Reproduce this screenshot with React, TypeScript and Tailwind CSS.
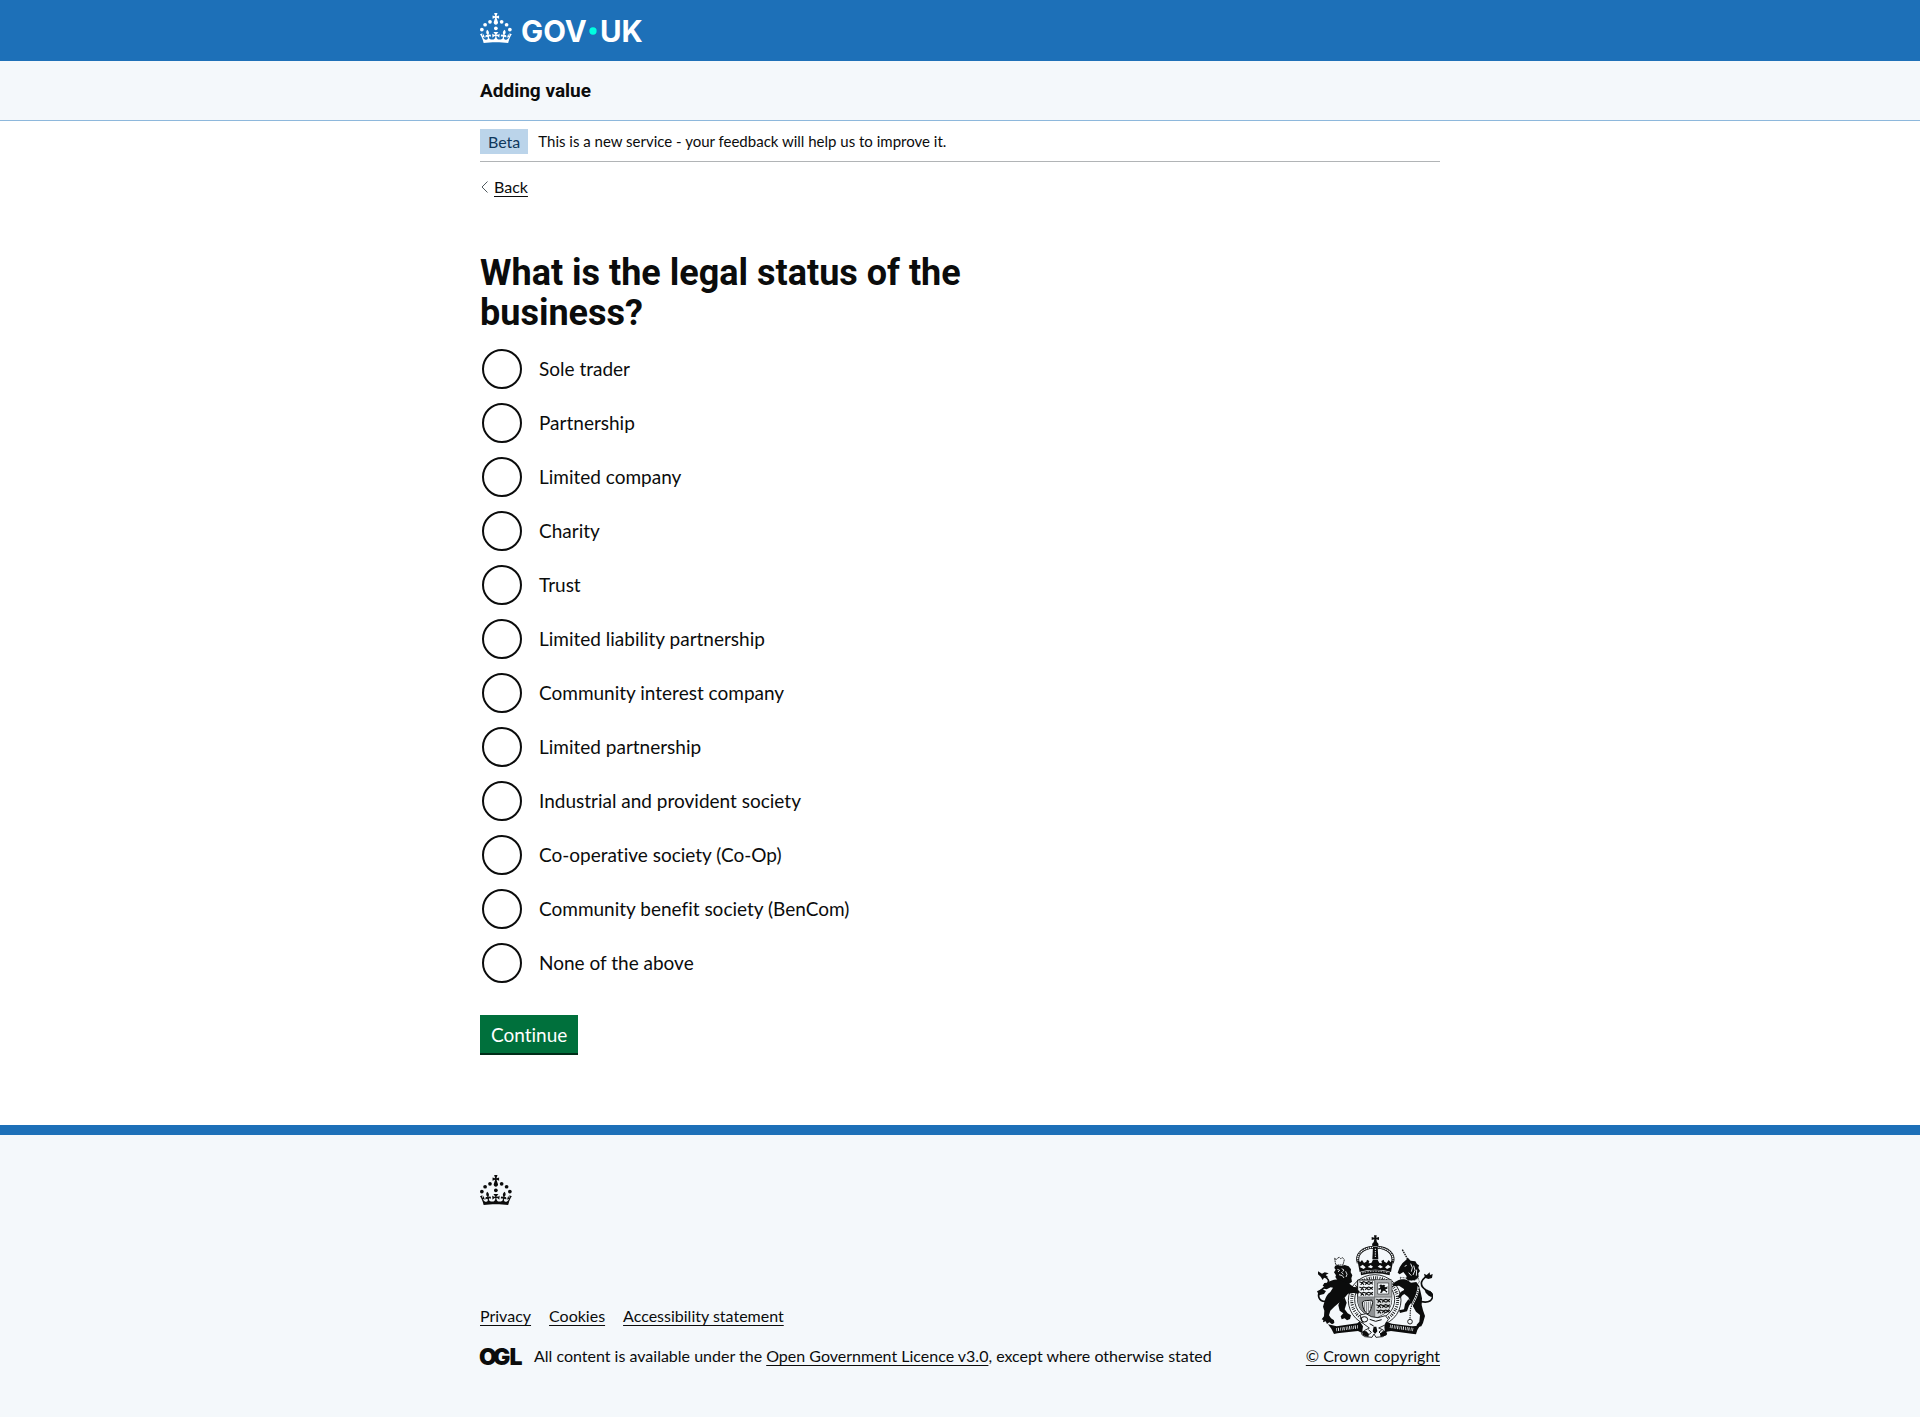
const options = [
  'Sole trader',
  'Partnership',
  'Limited company',
  'Charity',
  'Trust',
  'Limited liability partnership',
  'Community interest company',
  'Limited partnership',
  'Industrial and provident society',
  'Co-operative society (Co-Op)',
  'Community benefit society (BenCom)',
  'None of the above',
];

const linkClass = 'underline decoration-1 underline-offset-3 hover:decoration-[3px]';

function CrownShape() {
  return (
    <g>
      <circle cx="20" cy="17.6" r="3.7" />
      <circle cx="10.2" cy="23.5" r="3.7" />
      <circle cx="3.7" cy="33.2" r="3.7" />
      <circle cx="31.7" cy="30.6" r="3.7" />
      <circle cx="43.3" cy="17.6" r="3.7" />
      <circle cx="53.2" cy="23.5" r="3.7" />
      <circle cx="59.7" cy="33.2" r="3.7" />
      <path d="M33.1,9.8c.2-.1.3-.3.5-.5l4.6,2.4v-6.8l-4.6,1.5c-.1-.2-.3-.3-.5-.5l1.9-5.9h-6.7l1.9,5.9c-.2.1-.3.3-.5.5l-4.6-1.5v6.8l4.6-2.4c.1.2.3.3.5.5l-2.6,8c-.9,2.8,1.2,5.7,4.1,5.7h0c3,0,5.1-2.9,4.1-5.7l-2.6-8ZM37,37.9s-3.4,3.8-4.1,6.1c2.2,0,4.2-.5,6.4-2.8l-.7,8.5c-2-2.8-4.4-4.1-5.7-3.8.1,3.1.5,6.7,5.8,7.2,3.7.3,6.7-1.5,7-3.8.4-2.6-2-4.3-3.7-1.6-1.4-4.5,2.4-6.1,4.9-3.2-1.9-4.5-1.8-7.7,2.4-10.9,3,4,2.6,7.3-1.2,11.1,2.4-1.3,6.2,0,4,4.6-1.2-2.8-3.7-2.2-4.2.2-.3,1.7.7,3.7,3,4.2,1.9.3,4.7-.9,7-5.9-1.3,0-2.4.7-3.9,1.7l2.4-8c.6,2.3,1.4,3.7,2.2,4.5.6-1.6.5-2.8,0-5.3l5,1.8c-2.6,3.6-5.2,8.7-7.3,17.5-7.4-1.1-15.7-1.7-24.5-1.7h0c-8.8,0-17.1.6-24.5,1.7-2.1-8.9-4.7-13.9-7.3-17.5l5-1.8c-.5,2.5-.6,3.7,0,5.3.8-.8,1.6-2.3,2.2-4.5l2.4,8c-1.5-1-2.6-1.7-3.9-1.7,2.3,5,5.2,6.2,7,5.9,2.3-.4,3.3-2.4,3-4.2-.5-2.4-3-3.1-4.2-.2-2.2-4.6,1.6-6,4-4.6-3.7-3.7-4.2-7.1-1.2-11.1,4.2,3.2,4.3,6.4,2.4,10.9,2.5-2.8,6.3-1.3,4.9,3.2-1.8-2.7-4.1-1-3.7,1.6.3,2.3,3.3,4.1,7,3.8,5.4-.5,5.7-4.2,5.8-7.2-1.3-.2-3.7,1-5.7,3.8l-.7-8.5c2.2,2.3,4.2,2.7,6.4,2.8-.7-2.3-4.1-6.1-4.1-6.1h10.6,0Z" />
    </g>
  );
}

function GovLogo() {
  return (
    <svg
      viewBox="0 0 324 60"
      width="162"
      height="30"
      fill="currentColor"
      className="overflow-visible"
      role="img"
      aria-label="GOV.UK"
    >
      <CrownShape />
      <g fontFamily="Inter, sans-serif" fontWeight="700" fontSize="59">
        <text x="82" y="57">GOV</text>
        <text x="240" y="57">UK</text>
      </g>
      <circle cx="226" cy="36" r="7.3" fill="#00ffe0" />
    </svg>
  );
}

function OglLogo() {
  return (
    <svg
      viewBox="0 0 41 17"
      width="41"
      height="17"
      fill="currentColor"
      className="shrink-0 overflow-visible"
      aria-hidden="true"
    >
      <g fontFamily="Inter, sans-serif" fontWeight="900" fontSize="23">
        <text x="-1" y="16.8">O</text>
        <text x="13" y="16.8">G</text>
        <text x="29.5" y="16.8">L</text>
      </g>
    </svg>
  );
}

/* Three walking lions stacked, used in two quarters of the shield. */
function Lions({ x, y }: { x: number; y: number }) {
  return (
    <g transform={`translate(${x} ${y})`}>
      {[0, 16, 32].map((dy) => (
        <path
          key={dy}
          transform={`translate(0 ${dy})`}
          fill="none"
          stroke="#0b0c0c"
          strokeWidth="3.4"
          d="M1 2l7 3 6-3 8 3 7-3 8 3 5-3M5 12l5-6 5 6M19 11l4-6 6 6M31 11l5-6 5 5"
        />
      ))}
    </g>
  );
}

function RoyalArms() {
  return (
    <svg
      viewBox="82 43 348 309"
      width="116"
      height="103"
      fill="#0b0c0c"
      className="mr-[7px]"
      aria-hidden="true"
    >
      {/* crown */}
      <path d="M253 44h8l-1 7 8-2v9l-8-2 2 9c5 3 6 8 3 12h-16c-3-4-2-9 3-12l2-9-8 2v-9l8 2z" />
      <path
        d="M206 127c-9-26 14-46 45-47M308 127c9-26-14-46-45-47"
        fill="none"
        stroke="#0b0c0c"
        strokeWidth="9"
      />
      <path
        d="M206 127c-9-26 14-46 45-47M308 127c9-26-14-46-45-47"
        fill="none"
        stroke="#f4f8fb"
        strokeWidth="4"
        strokeDasharray="4 2"
      />
      <path d="M250 78h14l2 38h-18z" />
      <path d="M257 84v28" stroke="#f4f8fb" strokeWidth="3" strokeDasharray="4 3" />
      <path d="M203 117l8 8 6-7 6 9 7-4 2-6 7 4-2 7 8-1 5-10h14l5 10 8 1-2-7 7-4 2 6 7 4 6-9 6 7 8-8-7 37c-28-9-66-9-94 0z" />
      <path d="M210 139l9-7 9 8-6 5M234 139l9-6 7 5-5 5M264 138l7-5 9 6-7 4M286 140l9-8 9 7-12 6" fill="#f4f8fb" />
      <path d="M213 155c28-8 60-8 88 0l-1 9c-28-8-58-8-86 0z" />
      <path d="M217 157c27-7 53-7 80 0" fill="none" stroke="#f4f8fb" strokeWidth="2" strokeDasharray="5 3" />

      {/* garter */}
      <ellipse cx="255" cy="239" rx="79" ry="77" fill="#f4f8fb" stroke="#0b0c0c" strokeWidth="2.6" />
      <ellipse cx="255" cy="238" rx="69" ry="67" fill="none" stroke="#0b0c0c" strokeWidth="9" strokeDasharray="2.6 4 3 3 2 5" />
      <ellipse cx="255" cy="237" rx="60" ry="59" fill="#f4f8fb" stroke="#0b0c0c" strokeWidth="2.6" />

      {/* shield */}
      <path d="M204 178h102v58c0 28-18 46-51 56-33-10-51-28-51-56z" fill="#f4f8fb" stroke="#0b0c0c" strokeWidth="3" />
      <path d="M255 178h51v51h-51z" fill="#a9acae" />
      <path d="M264 187h33v33h-33z" fill="#f4f8fb" stroke="#0b0c0c" strokeWidth="1.6" />
      <path d="M274 191l3 3 6-2 4 3-3 4 6 1 3-4v8l-6 2 2 4 4 1-2 5-5-5-6-1-3 6-6 1 3-6 0-5-7 2-1-5 5-1 1-4-4-2z" />
      <path d="M255 229v63c33-10 51-28 51-56v-7z" fill="#d5d8da" />
      <path d="M204 229h51v62c-33-9-51-27-51-55z" fill="#8f9294" />
      <path d="M218 244c8-7 18-3 28-6l3 8c-4 16-7 26-14 34-10-5-17-18-17-36z" fill="#f4f8fb" stroke="#0b0c0c" strokeWidth="3" />
      <path d="M224 244v26M230 243v32M236 243v31M242 242v20" stroke="#0b0c0c" strokeWidth="1.6" />
      <Lions x={208} y={181} />
      <Lions x={259} y={234} />
      <path d="M255 178v114M204 229h102" stroke="#77797b" strokeWidth="3" />

      {/* lion supporter */}
      <path d="M135 113l5 4 4-5 5-2 4 4 6-3 5 6-4 16h-22z" fill="#f4f8fb" stroke="#0b0c0c" strokeWidth="2.6" strokeDasharray="5 1.6" />
      <path d="M136 136l8-3 10 3 11-3 12 4 7 9-1 9 5 9-3 9 2 10-10 8-16-2-10-8-8-3-6-9 2-5-6-9 5-8-4-5z" />
      <path d="M143 146l7 3-5 5M156 144l7 4-4 5M148 162l10 3 5 7M168 152l4 9-3 8M155 154l6 7" fill="none" stroke="#f4f8fb" strokeWidth="2.6" />
      <path d="M150 178c-14-4-26 2-38 8l-8 1-5 8 6 4-2 5 8 2 12-6 7 1-8 13c-10 7-14 16-17 27l-5 17 4 12-1 17-7 9 5 2-1 7 8-3 4 8 7-5 8 6 7-4-1-8-9-6-6-9 4-14 12-12 16-13 14-13 11-13 17-2 14 2 4-8-8-4 3-7-13-1-13-10-16-6z" />
      <path d="M151 239l-5 15 4 16 11 8-8 9 3 9 9-3 7 6 9-4 3-11-10-6-9-12 6-20-6-15z" />
      <path d="M121 240c-16 4-29 2-33-9-5-13 4-21 14-29 10-9 17-15 14-24-4-10-13-9-18-14" fill="none" stroke="#0b0c0c" strokeWidth="5" />
      <path d="M85 152l12 7 8-4 12 3-9 5 8 7-13 1-4 7-6-10-8-7zM82 212l14-7 13 6-6 9-15 4z" />

      {/* unicorn supporter */}
      <path d="M338 87l19 34" stroke="#0b0c0c" strokeWidth="4" strokeDasharray="5 2" />
      <path d="M355 112l8 8 14 2 5 8 6 4-2 8 5 9-5 7 1 11-9 8-17 4-13-4 3-10-10-13-11 7-6-5 6-16 8-12 10-9z" />
      <path d="M345 137l6-3M363 129l5 12-3 12M372 135l4 14-6 14M357 156l8 9M381 147l-1 18" fill="none" stroke="#f4f8fb" strokeWidth="2.8" />
      <path d="M331 170l17 2 7 7 19 0 12-6 3 10-6 9-12 5-15-1-13 3z" fill="#f4f8fb" stroke="#0b0c0c" strokeWidth="2" strokeDasharray="3 1.5" />
      <path d="M356 180c-17-8-29-3-40 4l-8 7 4 6 16-2 15 10 1 15 12 10 7 16 8 13 8 14 12 10-2 20-9 11 5 5 10-2 5-10 6-21-6-17-4-16 1-20-4-18-4-18-9-13-16 2z" />
      <path d="M347 206l-14 8-9 15 7 4 8-10 13-7M356 236l-10 14-3 16-15 3 3 8 21-5 6-17 8-10" />
      <path d="M387 196c-2 16-5 28-11 39-8 14-14 25-14 38l-1 22" fill="none" stroke="#f4f8fb" strokeWidth="6" />
      <path d="M387 196c-2 16-5 28-11 39-8 14-14 25-14 38l-1 22" fill="none" stroke="#0b0c0c" strokeWidth="3.4" strokeDasharray="4 3" />
      <circle cx="361" cy="303" r="7" fill="none" stroke="#0b0c0c" strokeWidth="2.6" />
      <path d="M394 243c16 3 31 0 34-12 3-14-8-17-19-23-12-7-16-14-13-25 3-10 10-11 14-17" fill="none" stroke="#0b0c0c" strokeWidth="5" />
      <path d="M403 159l8 4 9-8 1 8 8-3-2 12-11 3-10-4zM404 205l10 7 7-2 7 8-2 12-9-5-9-9z" />

      {/* compartment and motto scroll */}
      <path d="M211 283l18-4 16 9 20 3 22-6 9 11-10 17-19 9 14 6 11 12-13 8-20 2-6-10-6 10-22-2-10-8 10-11 14-7-18-13z" fill="#f4f8fb" stroke="#0b0c0c" strokeWidth="2.6" />
      <ellipse cx="224" cy="296" rx="10" ry="8" fill="none" stroke="#0b0c0c" strokeWidth="3" />
      <path d="M240 296l18 6 18-5M240 309l12 7M236 327l9 8-7 7M276 328l-8 6 8 8" fill="none" stroke="#0b0c0c" strokeWidth="3" />
      <path d="M218 330l12 2 8 8-2 9-17-5zM291 330l-12 2-8 8 2 9 17-5zM252 318h8l3 14-7 8-7-8z" />
      <path d="M115 311l26 6 62-9 7-6 10 15-3 20-12-6-62 7-10 2-8-16z" />
      <path d="M391 315l-24 2-60-8-18-6-5 15 2 16 18-3 62 8 13 2 4-13z" />
      <path d="M140 327l66-9M301 317l72 10" fill="none" stroke="#f4f8fb" strokeWidth="10" strokeDasharray="2 3 3 4 2 3" />
    </svg>
  );
}

function Container({ className = '', children }: { className?: string; children: React.ReactNode }) {
  return <div className={`mx-auto w-full max-w-[960px] ${className}`}>{children}</div>;
}

export default function App() {
  return (
    <div className="flex min-h-screen flex-col bg-white font-['Lato',sans-serif] text-[#0b0c0c] [font-variant-ligatures:none]">
      <header>
        <div className="bg-[#1d70b8] pt-[13px] pb-[18px] text-white">
          <Container>
            <a href="#" className="flex w-fit">
              <GovLogo />
            </a>
          </Container>
        </div>
        <div className="border-b border-[#8eb8dc] bg-[#f4f8fb] py-[17px]">
          <Container>
            <a href="#" className="block w-fit font-['Roboto',sans-serif] text-[19px] leading-[25px] font-bold">
              Adding value
            </a>
          </Container>
        </div>
      </header>

      <Container>
        <div className="flex items-center gap-[10px] border-b border-[#b1b4b6] pt-2 pb-[7px] text-base leading-[25px]">
          <strong className="bg-[#bbd4ea] px-2 font-normal text-[#0f385c]">Beta</strong>
          <span className="text-[15px]">This is a new service - your feedback will help us to improve it.</span>
        </div>
        <a href="#" className="mt-[15px] flex w-fit items-center gap-[5px] text-base leading-5">
          <svg viewBox="0 0 9 12" width="9" height="12" fill="none" stroke="#505a5f" aria-hidden="true">
            <path d="M7.5 0.5L2 6l5.500 5.500" />
          </svg>
          <span className={linkClass}>Back</span>
        </a>
      </Container>

      <Container className="flex-1 pt-14 pb-[70px]">
        <main>
          <form onSubmit={(event) => event.preventDefault()}>
            <fieldset className="max-w-[600px]">
              <legend className="font-['Roboto',sans-serif] text-4xl leading-10 font-bold">
                <h1>What is the legal status of the business?</h1>
              </legend>
              <div className="mt-[14px] flex flex-col gap-[10px]">
                {options.map((option, index) => (
                  <div key={option} className="flex items-center">
                    <input
                      type="radio"
                      name="legal-status"
                      id={`legal-status-${index}`}
                      className="m-0.5 size-10 shrink-0 appearance-none rounded-full border-2 border-[#0b0c0c] bg-transparent checked:bg-[#0b0c0c] checked:shadow-[inset_0_0_0_8px_white]"
                    />
                    <label htmlFor={`legal-status-${index}`} className="px-[15px] pb-px text-[19px] leading-[25px]">
                      {option}
                    </label>
                  </div>
                ))}
              </div>
            </fieldset>
            <button
              type="submit"
              className="mt-[30px] mb-[2px] block bg-[#00703c] px-[11px] pt-[10px] pb-[9px] text-[19px] leading-[19px] text-white shadow-[0_2px_0_#002d18]"
            >
              Continue
            </button>
          </form>
        </main>
      </Container>

      <footer className="border-t-[10px] border-[#1d70b8] bg-[#f4f8fb] pt-10 pb-[51px] text-base leading-5">
        <Container>
          <svg viewBox="0 0 64 60" width="32" height="30" fill="currentColor" aria-hidden="true">
            <CrownShape />
          </svg>
          <div className="mt-[30px] flex items-end justify-between">
            <div className="flex flex-col gap-5">
              <ul className="flex gap-[18px]">
                {['Privacy', 'Cookies', 'Accessibility statement'].map((label) => (
                  <li key={label}>
                    <a href="#" className={linkClass}>
                      {label}
                    </a>
                  </li>
                ))}
              </ul>
              <div className="flex items-center gap-[13px]">
                <OglLogo />
                <span>
                  All content is available under the{' '}
                  <a href="#" className={linkClass}>
                    Open Government Licence v3.0
                  </a>
                  , except where otherwise stated
                </span>
              </div>
            </div>
            <a href="#" className={`flex flex-col items-end gap-2 ${linkClass}`}>
              <RoyalArms />
              © Crown copyright
            </a>
          </div>
        </Container>
      </footer>
    </div>
  );
}
